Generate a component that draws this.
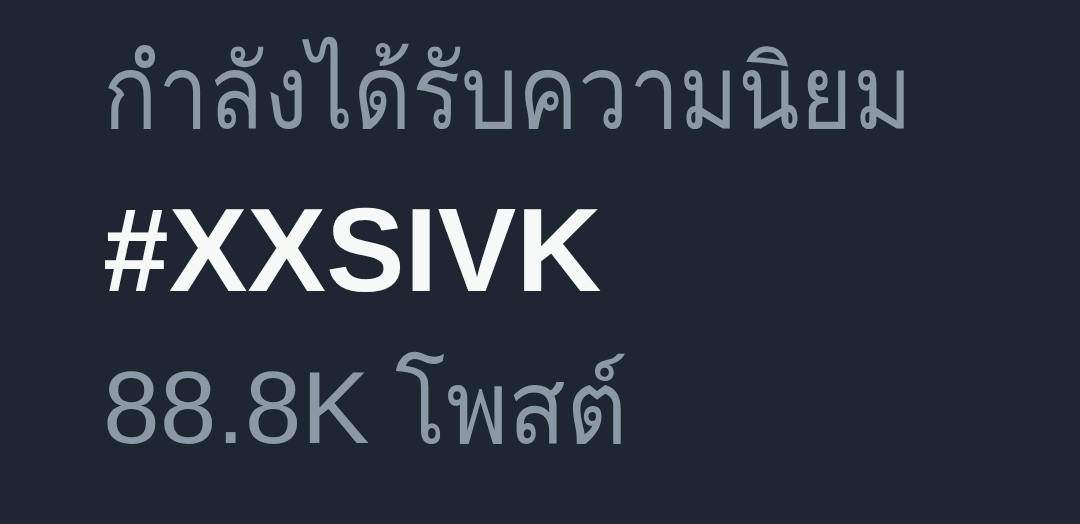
export default function App() {
  return (
    <div
      className="w-[1080px] h-[524px] bg-[#1d2631] pl-[103px] pt-[15px] overflow-hidden"
      style={{ fontFamily: '"Liberation Sans", Arial, "Noto Sans", sans-serif' }}
    >
      <div className="text-[102px] leading-[156px] h-[156px] text-[#8b98a5] whitespace-nowrap">
        <span className="inline-block origin-left scale-x-[0.885]">กำลังได้รับความนิยม</span>
      </div>
      <div className="text-[118px] leading-[158px] h-[158px] font-bold text-[#f7f9f9] whitespace-nowrap">#XXSIVK</div>
      <div className="text-[102px] leading-[158px] h-[158px] text-[#8b98a5] whitespace-nowrap">
        88.8K <span className="inline-block origin-left scale-x-[0.93] -ml-[3px]">โพสต์</span>
      </div>
    </div>
  );
}
